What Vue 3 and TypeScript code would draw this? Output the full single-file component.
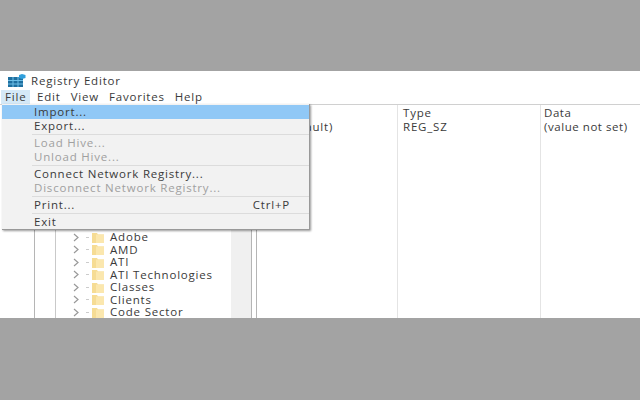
<template>
  <div class="page">
    <div class="band top"></div>
    <section class="window">
      <header class="title">
        <svg class="app-icon" width="18" height="13" viewBox="0 0 18 13">
          <rect x="0" y="3" width="15" height="10" fill="#1f6f9f" />
          <path d="M5 3v10M10 3v10M0 6.500h15M0 10h15" stroke="#6fc0e8" stroke-width="1" />
          <path d="M11 1l3-1 3.500 1v3l-3.500 1-3-1z" fill="#2f9fdc" />
        </svg>
        <span>Registry Editor</span>
      </header>
      <nav class="menubar">
        <span v-for="m in menus" :key="m" class="menu-item" :class="{ active: m === 'File' }">{{ m }}</span>
      </nav>
      <div class="panes">
        <aside class="tree">
          <div class="tree-gutter"></div>
          <ul class="tree-list">
            <li v-for="k in keys" :key="k" class="tree-row">
              <svg class="chev" width="7" height="9" viewBox="0 0 7 9">
                <path d="M1 1l4 3.500-4 3.500" fill="none" stroke="#999" stroke-width="1.200" />
              </svg>
              <span class="dash"></span>
              <svg class="folder" width="12" height="11" viewBox="0 0 12 11">
                <path d="M0 1h5l1 1.500h6V11H0z" fill="#f6dc94" />
                <path d="M4 2.500h8V11H4z" fill="#fbe7ae" />
              </svg>
              <span>{{ k }}</span>
            </li>
          </ul>
          <div class="scroll"></div>
        </aside>
        <div class="values">
          <div class="col name">
            <div>Name</div>
            <div class="default-val">(Default)</div>
          </div>
          <div class="col type">
            <div>Type</div>
            <div>REG_SZ</div>
          </div>
          <div class="col data">
            <div>Data</div>
            <div>(value not set)</div>
          </div>
        </div>
      </div>
      <div class="dropdown">
        <template v-for="(g, i) in groups" :key="i">
          <div v-if="i > 0" class="sep"></div>
          <div
            v-for="row in g"
            :key="row.label"
            class="drop-row"
            :class="{ hot: row.hot, off: row.off }"
          >
            <span>{{ row.label }}</span>
            <span v-if="row.keys" class="accel">{{ row.keys }}</span>
          </div>
        </template>
      </div>
    </section>
    <div class="band bottom"></div>
  </div>
</template>

<script setup lang="ts">
interface MenuRow {
  label: string;
  hot?: boolean;
  off?: boolean;
  keys?: string;
}

const menus = ["File", "Edit", "View", "Favorites", "Help"];
const keys = ["Adobe", "AMD", "ATI", "ATI Technologies", "Classes", "Clients", "Code Sector"];

const groups: MenuRow[][] = [
  [{ label: "Import...", hot: true }, { label: "Export..." }],
  [
    { label: "Load Hive...", off: true },
    { label: "Unload Hive...", off: true },
  ],
  [
    { label: "Connect Network Registry..." },
    { label: "Disconnect Network Registry...", off: true },
  ],
  [{ label: "Print...", keys: "Ctrl+P" }],
  [{ label: "Exit" }],
];
</script>

<style scoped>
.page {
  width: 640px;
  height: 400px;
  display: flex;
  flex-direction: column;
  overflow: hidden;
  font-family: "Open Sans", "Liberation Sans", sans-serif;
  font-size: 11.5px;
  letter-spacing: 0.8px;
  color: #3a3a3a;
}

.band {
  background: #a3a3a3;
}

.top {
  height: 71px;
}

.bottom {
  height: 82px;
}

.window {
  position: relative;
  height: 247px;
  background: #fff;
  display: flex;
  flex-direction: column;
  overflow: hidden;
}

.title {
  height: 19px;
  display: flex;
  align-items: center;
  padding-left: 8px;
  gap: 5px;
  flex: none;
}

.menubar {
  height: 14px;
  display: flex;
  flex: none;
}

.menu-item {
  padding: 0 5px;
  line-height: 14px;
}

.menu-item.active {
  width: 29px;
  box-sizing: border-box;
  background: #d5e9f7;
  padding: 0 0 0 4px;
  margin-left: 1px;
  margin-right: 2px;
}

.panes {
  flex: 1;
  display: flex;
  min-height: 0;
  border-top: 1px solid #d0d0d0;
}

.tree {
  width: 216px;
  flex: none;
  display: flex;
  margin-left: 34px;
  border-left: 1px solid #b5b5b5;
  border-right: 1px solid #b5b5b5;
}

.tree-gutter {
  width: 20px;
  flex: none;
  border-right: 1px solid #c9c9c9;
}

.tree-list {
  list-style: none;
  margin: 0;
  padding: 126px 0 0 17px;
  flex: 1;
  min-width: 0;
}

.tree-row {
  height: 12.5px;
  line-height: 12.5px;
  display: flex;
  align-items: center;
  white-space: nowrap;
}

.chev {
  flex: none;
}

.dash {
  width: 3px;
  height: 1px;
  background: #ccc;
  margin: 0 3px 0 6px;
  flex: none;
}

.folder {
  flex: none;
  margin-right: 6px;
}

.scroll {
  width: 20px;
  flex: none;
  background: #f0f0f0;
}

.values {
  flex: 1;
  display: flex;
  border-left: 1px solid #b5b5b5;
  margin-left: 4px;
}

.col {
  padding-top: 1px;
  line-height: 14px;
}

.col > div {
  height: 14px;
}

.name {
  width: 141px;
  padding-left: 4px;
  box-sizing: border-box;
  border-right: 1px solid #e4e4e4;
}

.default-val {
  padding-left: 19px;
}

.type {
  width: 143px;
  padding-left: 5px;
  box-sizing: border-box;
  border-right: 1px solid #e4e4e4;
}

.data {
  padding-left: 3px;
  letter-spacing: 0.55px;
}

.dropdown {
  position: absolute;
  left: 2px;
  top: 33px;
  width: 308px;
  height: 126px;
  box-sizing: border-box;
  padding-top: 1px;
  background: #f2f2f2;
  border-right: 1px solid #999;
  border-bottom: 1px solid #999;
  box-shadow: 1px 1px 2px rgba(0, 0, 0, 0.4);
}

.drop-row {
  height: 14px;
  line-height: 14px;
  padding: 0 19px 0 32px;
  display: flex;
  justify-content: space-between;
}

.drop-row.hot {
  background: #90c8f6;
}

.drop-row.off {
  color: #a0a0a0;
}

.sep {
  height: 1px;
  margin: 1px 0 1px 30px;
  background: #dcdcdc;
}
</style>
